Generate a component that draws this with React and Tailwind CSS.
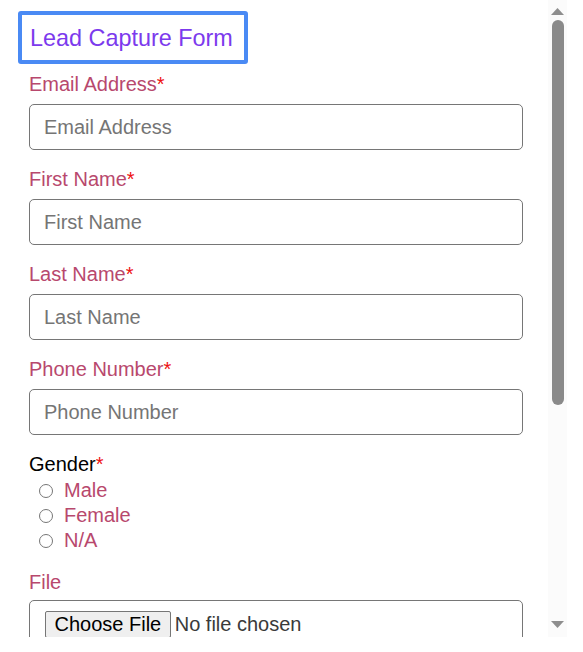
import React from "react";

const font = { fontFamily: '"Liberation Sans", Arial, sans-serif' };

function Label({ text, required = true, black = false }) {
  return (
    <label className={`block text-[20px] leading-[23px] ${black ? "text-black" : "text-[#b8486d]"}`}>
      {text}
      {required && <span className="text-[#ee1111]">*</span>}
    </label>
  );
}

function TextField({ label, mt = "mt-[18px]" }) {
  return (
    <div className={mt}>
      <Label text={label} />
      <input
        type="text"
        placeholder={label}
        className="mt-[8px] block w-[494px] h-[46px] rounded-[5px] border border-[#767676] bg-white px-[14px] text-[20px] text-black placeholder:text-[#757575] outline-none"
      />
    </div>
  );
}

function Radio({ label }) {
  return (
    <label className="flex items-center h-[25px]">
      <input type="radio" name="gender" className="m-0 ml-[10px] w-[14px] h-[14px]" />
      <span className="ml-[11px] text-[20px] leading-[23px] text-[#b8486d]">{label}</span>
    </label>
  );
}

function Scrollbar() {
  return (
    <div className="w-[19px] h-[637px] bg-[#fbfbfb] flex flex-col items-center">
      <svg width="13" height="7" viewBox="0 0 13 7" className="mt-[8px]">
        <polygon points="6.5,0 13,7 0,7" fill="#8e8e8e" />
      </svg>
      <div className="mt-[5px] w-[12px] h-[385px] rounded-full bg-[#8a8a8a]" />
      <div className="flex-1" />
      <svg width="13" height="7" viewBox="0 0 13 7" className="mb-[9px]">
        <polygon points="0,0 13,0 6.5,7" fill="#8e8e8e" />
      </svg>
    </div>
  );
}

export default function App() {
  return (
    <div className="w-[583px] h-[652px] bg-white" style={font}>
      <div className="flex w-[567px] h-[637px]">
        <div className="w-[548px] h-[637px] overflow-hidden pt-[11px]">
          <div className="ml-[18px] flex items-center w-[230px] h-[53px] px-[8px] border-4 border-[#4a8af4] rounded-[3px]">
            <h1 className="text-[23.4px] leading-[28px] text-[#7c3aed] font-normal whitespace-nowrap">Lead Capture Form</h1>
          </div>
          <form className="pl-[29px]" onSubmit={(e) => e.preventDefault()}>
            <TextField label="Email Address" mt="mt-[9px]" />
            <TextField label="First Name" />
            <TextField label="Last Name" />
            <TextField label="Phone Number" />
            <div className="mt-[18px]">
              <Label text="Gender" black />
              <div className="mt-[2px]">
                <Radio label="Male" />
                <Radio label="Female" />
                <Radio label="N/A" />
              </div>
            </div>
            <div className="mt-[18px]">
              <Label text="File" required={false} />
              <div className="mt-[6px] w-[494px] h-[48px] rounded-[5px] border border-[#767676] px-[15px] pt-[10px]">
                <input
                  type="file"
                  className="text-[20px] leading-[23px] text-[#3a3a3a] file:mr-[4px] file:px-[8.5px] file:py-[1px] file:border file:border-[#767676] file:rounded-[2px] file:bg-[#efefef] file:text-black"
                />
              </div>
            </div>
          </form>
        </div>
        <Scrollbar />
      </div>
    </div>
  );
}
